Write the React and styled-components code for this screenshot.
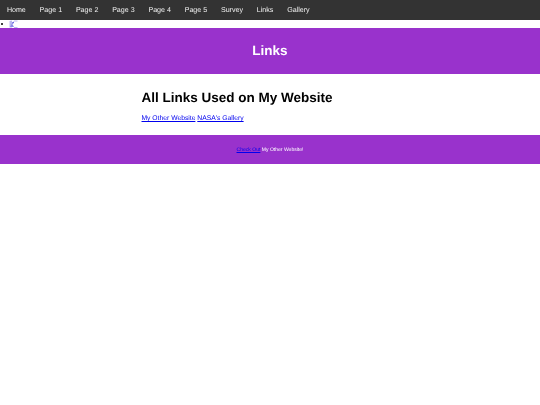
import React from "react";
import styled, { createGlobalStyle } from "styled-components";

const Global = createGlobalStyle`
  html, body { margin: 0; padding: 0; background: #fff; }
  body { font-family: "Liberation Sans", Arial, sans-serif; text-rendering: geometricPrecision; }
`;

const Page = styled.div`
  filter: blur(0.3px);
`;
const Nav = styled.nav`
  display: flex;
  height: 20px;
  background: #333;
`;
const NavLink = styled.a`
  padding: 0 6.9px;
  line-height: 20px;
  font-size: 7.1px;
  color: #f2f2f2;
  text-decoration: none;
`;
const IconList = styled.ul`
  margin: 0;
  height: 8px;
  padding: 0 0 0 9px;
  list-style: none;
  display: flex;
  align-items: center;
  position: relative;
`;
const Bullet = styled.span`
  position: absolute;
  left: 0.5px;
  top: 2.5px;
  width: 2.5px;
  height: 2.5px;
  border-radius: 50%;
  background: #000;
`;
const Header = styled.header`
  height: 46px;
  box-sizing: border-box;
  padding-bottom: 2px;
  background: #9932cc;
  display: flex;
  align-items: center;
  justify-content: center;
`;
const Title = styled.h1`
  margin: 0;
  font-size: 13.5px;
  font-weight: 700;
  color: #fff;
`;
const Main = styled.main`
  height: 61px;
  padding: 16px 0 0 141.5px;
  box-sizing: border-box;
`;
const Heading = styled.h2`
  margin: 0 0 9px;
  font-size: 13.5px;
  line-height: 16px;
  font-weight: 700;
  color: #000;
`;
const LinkRow = styled.p`
  margin: 0;
  font-size: 6.75px;
  line-height: 8px;
`;
const Link = styled.a`
  color: #00e;
  text-decoration: underline;
  text-decoration-thickness: 0.5px;
`;
const Footer = styled.footer`
  height: 29px;
  background: #9932cc;
  display: flex;
  align-items: center;
  justify-content: center;
  font-size: 5.06px;
  color: #fff;
  white-space: pre;
`;

const items = ["Home", "Page 1", "Page 2", "Page 3", "Page 4", "Page 5", "Survey", "Links", "Gallery"];

export default function App() {
  return (
    <Page>
      <Global />
      <Nav>
        {items.map((t) => (
          <NavLink href="#" key={t}>{t}</NavLink>
        ))}
      </Nav>
      <IconList>
        <Bullet />
        <li>
          <svg width="9" height="8" viewBox="0 0 9 8" style={{ display: "block" }}>
            <path d="M0.5 7.5V1L3 0.5V7.5Z" fill="#b9b9ef" />
            <path d="M3 2.5L5 1.5V3L3 4Z" fill="#6a6ae0" />
            <path d="M1 7L3 3.5L5 7Z" fill="#8d8de8" />
            <path d="M5 1H8.5M5 7.5H8.5" stroke="#a8a8ee" strokeWidth="0.8" />
          </svg>
        </li>
      </IconList>
      <Header><Title>Links</Title></Header>
      <Main>
        <Heading>All Links Used on My Website</Heading>
        <LinkRow>
          <Link href="#">My Other Website</Link> <Link href="#">NASA's Gallery</Link>
        </LinkRow>
      </Main>
      <Footer>
        <Link href="#">Check Out</Link> My Other Website!
      </Footer>
    </Page>
  );
}
